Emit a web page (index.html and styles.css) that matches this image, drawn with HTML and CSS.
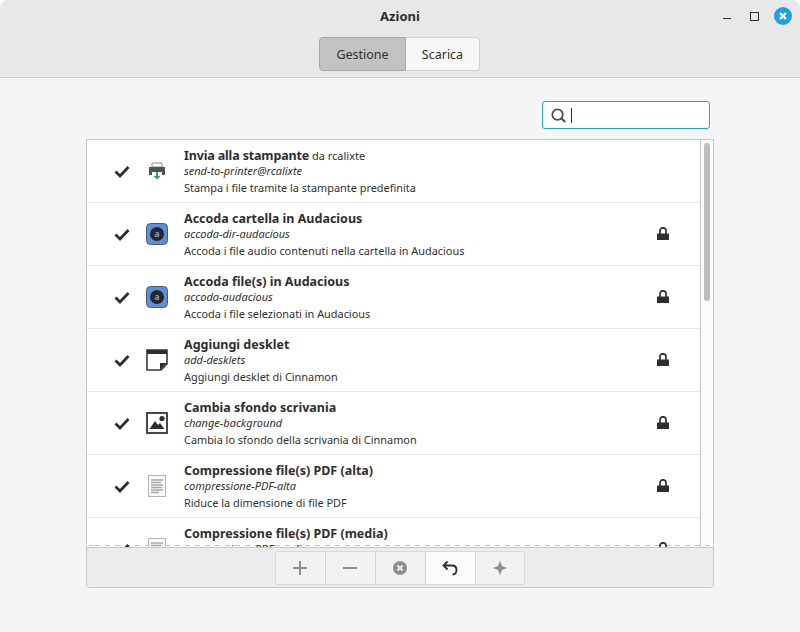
FILE: index.html
```html
<!DOCTYPE html>
<html lang="en">
<head>
  <meta charset="UTF-8">
  <title>Azioni</title>
  <link rel="stylesheet" href="styles.css">
</head>
<body>

<svg class="defs" width="0" height="0">
  <symbol id="check" viewBox="0 0 16 16">
    <path d="M1.5 8.5 L6 13 L14.5 4" fill="none" stroke="#2e2e2e" stroke-width="2.8"/>
  </symbol>
  <symbol id="lock" viewBox="0 0 12 13">
    <path d="M3 7 V3.8 a3 3 0 0 1 6 0 V7" fill="none" stroke="#2e2e2e" stroke-width="1.7"/>
    <rect x="0" y="6.5" width="12" height="6.5" fill="#2e2e2e"/>
  </symbol>
  <symbol id="pdf" viewBox="0 0 18 22">
    <rect x="0.5" y="0.5" width="17" height="21" fill="#fafafa" stroke="#b4b4b4"/>
    <path d="M3 5 H15 M3 7.5 H13 M3 10 H15 M3 12.5 H14 M3 15 H15 M3 17.5 H11" stroke="#a8a8a8" stroke-width="1.4"/>
  </symbol>
</svg>

<div class="window">
  <header class="titlebar">
    <div class="title">Azioni</div>
    <div class="winbtns">
      <span class="win-min"></span>
      <span class="win-max"></span>
      <svg class="win-close" width="18" height="18" viewBox="0 0 18 18">
        <circle cx="9" cy="9" r="9" fill="#20a0e0"/>
        <path d="M6 6 L12 12 M12 6 L6 12" stroke="#fff" stroke-width="2.4"/>
      </svg>
    </div>
    <div class="switcher">
      <button class="tab active">Gestione</button>
      <button class="tab">Scarica</button>
    </div>
  </header>

  <main class="content">
    <div class="search-row">
      <div class="search">
        <svg width="15" height="15" viewBox="0 0 16 16">
          <circle cx="7" cy="7" r="5.6" fill="none" stroke="#4e4e4e" stroke-width="1.9"/>
          <path d="M11 11 L15 15" stroke="#4e4e4e" stroke-width="2.2"/>
        </svg>
        <span class="caret"></span>
      </div>
    </div>

    <div class="panel">
      <div class="list-wrap">
        <ul class="list">
          <li class="row">
            <svg class="check"><use href="#check"/></svg>
            <svg class="icon" width="22" height="22" viewBox="0 0 22 22">
              <path d="M6 3 H16 V7 H6 Z" fill="none" stroke="#8a8a8a" stroke-width="1"/>
              <path d="M3 7 H19 V15 H16 V12 H6 V15 H3 Z" fill="#4f5356"/>
              <path d="M11 12 V17" stroke="#2aa55a" stroke-width="2"/>
              <path d="M7.5 16 H14.5 L11 19.5 Z" fill="#2aa55a"/>
            </svg>
            <div class="info">
              <div class="name"><b class="tight">Invia alla stampante</b> <span>da rcalixte</span></div>
              <div class="uuid">send-to-printer@rcalixte</div>
              <div class="desc">Stampa i file tramite la stampante predefinita</div>
            </div>
          </li>
          <li class="row">
            <svg class="check"><use href="#check"/></svg>
            <svg class="icon" width="22" height="22" viewBox="0 0 22 22">
              <rect x="0.5" y="0.5" width="21" height="21" rx="4" fill="#5d8fdc" stroke="#465a7a"/>
              <circle cx="11" cy="11" r="7" fill="#26282c"/>
              <text x="11" y="14" text-anchor="middle" font-family="Noto Sans" font-size="9" font-weight="bold" fill="#7f9cc8">a</text>
            </svg>
            <div class="info">
              <div class="name"><b>Accoda cartella in Audacious</b></div>
              <div class="uuid">accoda-dir-audacious</div>
              <div class="desc">Accoda i file audio contenuti nella cartella in Audacious</div>
            </div>
            <svg class="lock"><use href="#lock"/></svg>
          </li>
          <li class="row">
            <svg class="check"><use href="#check"/></svg>
            <svg class="icon" width="22" height="22" viewBox="0 0 22 22">
              <rect x="0.5" y="0.5" width="21" height="21" rx="4" fill="#5d8fdc" stroke="#465a7a"/>
              <circle cx="11" cy="11" r="7" fill="#26282c"/>
              <text x="11" y="14" text-anchor="middle" font-family="Noto Sans" font-size="9" font-weight="bold" fill="#7f9cc8">a</text>
            </svg>
            <div class="info">
              <div class="name"><b>Accoda file(s) in Audacious</b></div>
              <div class="uuid">accoda-audacious</div>
              <div class="desc">Accoda i file selezionati in Audacious</div>
            </div>
            <svg class="lock"><use href="#lock"/></svg>
          </li>
          <li class="row">
            <svg class="check"><use href="#check"/></svg>
            <svg class="icon" width="22" height="22" viewBox="0 0 22 22">
              <path d="M1 1 H21 V15 L15 21 H1 Z" fill="#fff" stroke="#3a3a3a" stroke-width="1.6"/>
              <rect x="1" y="1" width="20" height="4" fill="#2e2e2e"/>
              <path d="M21 14 H14 V21 Z" fill="#2e2e2e"/>
            </svg>
            <div class="info">
              <div class="name"><b>Aggiungi desklet</b></div>
              <div class="uuid">add-desklets</div>
              <div class="desc">Aggiungi desklet di Cinnamon</div>
            </div>
            <svg class="lock"><use href="#lock"/></svg>
          </li>
          <li class="row">
            <svg class="check"><use href="#check"/></svg>
            <svg class="icon" width="22" height="22" viewBox="0 0 22 22">
              <rect x="1" y="1" width="20" height="20" fill="#fff" stroke="#333" stroke-width="1.8"/>
              <circle cx="16" cy="6.5" r="2.6" fill="#2e2e2e"/>
              <path d="M3.5 17 L9 9 L12 13 L14 11 L18.5 17 Z" fill="#2e2e2e"/>
            </svg>
            <div class="info">
              <div class="name"><b>Cambia sfondo scrivania</b></div>
              <div class="uuid">change-background</div>
              <div class="desc">Cambia lo sfondo della scrivania di Cinnamon</div>
            </div>
            <svg class="lock"><use href="#lock"/></svg>
          </li>
          <li class="row">
            <svg class="check"><use href="#check"/></svg>
            <svg class="icon small" width="18" height="22"><use href="#pdf"/></svg>
            <div class="info">
              <div class="name"><b>Compressione file(s) PDF (alta)</b></div>
              <div class="uuid">compressione-PDF-alta</div>
              <div class="desc">Riduce la dimensione di file PDF</div>
            </div>
            <svg class="lock"><use href="#lock"/></svg>
          </li>
          <li class="row">
            <svg class="check"><use href="#check"/></svg>
            <svg class="icon small" width="18" height="22"><use href="#pdf"/></svg>
            <div class="info">
              <div class="name"><b>Compressione file(s) PDF (media)</b></div>
              <div class="uuid">compressione-PDF-media</div>
              <div class="desc">Riduce la dimensione di file PDF</div>
            </div>
            <svg class="lock"><use href="#lock"/></svg>
          </li>
        </ul>
        <div class="scrollbar"><div class="thumb"></div></div>
        <div class="dash"></div>
      </div>

      <div class="toolbar">
        <div class="tools">
          <button class="tool">
            <svg width="16" height="16" viewBox="0 0 16 16"><path d="M8 1 V15 M1 8 H15" stroke="#8e8e8e" stroke-width="2"/></svg>
          </button>
          <button class="tool">
            <svg width="16" height="16" viewBox="0 0 16 16"><path d="M1 8 H15" stroke="#8e8e8e" stroke-width="2"/></svg>
          </button>
          <button class="tool">
            <svg width="16" height="16" viewBox="0 0 16 16">
              <circle cx="8" cy="8" r="7" fill="#8e8e8e"/>
              <path d="M5.5 5.5 L10.5 10.5 M10.5 5.5 L5.5 10.5" stroke="#f0f0f0" stroke-width="2"/>
            </svg>
          </button>
          <button class="tool on">
            <svg width="16" height="16" viewBox="0 0 16 16">
              <path d="M5.5 1.5 L1.5 5.5 L5.5 9.5 M1.5 5.5 H10 C13 5.5 14.5 7.5 14.5 10 C14.5 12.5 13 14.5 10.5 14.5" fill="none" stroke="#2e2e2e" stroke-width="1.8"/>
            </svg>
          </button>
          <button class="tool">
            <svg width="16" height="16" viewBox="0 0 16 16"><path d="M8 1 L10 6 L15 8 L10 10 L8 15 L6 10 L1 8 L6 6 Z" fill="#8e8e8e"/></svg>
          </button>
        </div>
      </div>
    </div>
  </main>
</div>

</body>
</html>
```

FILE: styles.css
```css
* {
  box-sizing: border-box;
}
html, body {
  margin: 0;
  height: 100%;
  background: #fff;
}
body {
  font-family: "Noto Sans", "Open Sans", sans-serif;
  font-size: 11px;
  color: #303030;
  overflow: hidden;
}
.defs {
  position: absolute;
}
.window {
  width: 800px;
  height: 632px;
  display: flex;
  flex-direction: column;
  background: #f5f5f5;
  border-radius: 8px 8px 0 0;
  overflow: hidden;
}

/* header */
.titlebar {
  position: relative;
  height: 78px;
  background: #e8e8e8;
  border-bottom: 1px solid #cbcbcb;
  padding: 37px 1px 0 0;
  display: flex;
  justify-content: center;
  flex-shrink: 0;
}
.title {
  position: absolute;
  top: 7px;
  left: 0;
  right: 0;
  text-align: center;
  font-size: 13px;
  font-weight: bold;
  color: #2e2e2e;
}
.winbtns {
  position: absolute;
  top: 7px;
  right: 8px;
  display: flex;
  align-items: center;
  gap: 15px;
  height: 18px;
}
.win-min {
  width: 8px;
  height: 1px;
  background: #2e2e2e;
  margin-top: 5px;
  margin-right: 4px;
}
.win-max {
  width: 9px;
  height: 9px;
  border: 1px solid #2e2e2e;
}
.switcher {
  display: flex;
  height: 34px;
}
.tab {
  font-family: inherit;
  font-size: 12.5px;
  color: #303030;
  background: #f7f7f7;
  border: 1px solid #cfcfcf;
  border-left: none;
  border-radius: 0 4px 4px 0;
  width: 74px;
  padding: 0;
}
.tab.active {
  width: 87px;
  background: #c2c2c2;
  border: 1px solid #a8a8a8;
  border-radius: 4px 0 0 4px;
}

/* content */
.content {
  flex: 1;
  padding: 23px 86px 44px;
  display: flex;
  flex-direction: column;
}
.search-row {
  display: flex;
  justify-content: flex-end;
  padding-right: 4px;
  margin-bottom: 10px;
}
.search {
  width: 168px;
  height: 28px;
  background: #fff;
  border: 1px solid #20a0e0;
  border-radius: 3px;
  display: flex;
  align-items: center;
  padding-left: 8px;
  gap: 5px;
}
.caret {
  width: 1px;
  height: 15px;
  background: #2e2e2e;
}
.panel {
  flex: 1;
  border: 1px solid #c8c8c8;
  border-radius: 0 0 3px 3px;
  display: flex;
  flex-direction: column;
  min-height: 0;
}
.list-wrap {
  position: relative;
  height: 407px;
  display: flex;
  overflow: hidden;
  background: #fff;
  flex-shrink: 0;
}
.list {
  list-style: none;
  margin: 0;
  padding: 0;
  flex: 1;
}
.row {
  position: relative;
  z-index: 1;
  height: 63px;
  display: flex;
  align-items: center;
  border-bottom: 1px solid #e4e4e4;
}
.check {
  width: 16px;
  height: 16px;
  margin-left: 27px;
  flex-shrink: 0;
}
.icon {
  flex-shrink: 0;
  margin-left: 16px;
  margin-right: 16px;
}
.icon.small {
  margin-left: 18px;
  margin-right: 18px;
}
.info {
  flex: 1;
  align-self: flex-start;
  padding-top: 8px;
  line-height: 16px;
}
.name {
  font-size: 11px;
  margin-bottom: -2px;
}
.name b {
  font-size: 12.5px;
  color: #2e2e2e;
}
.name b.tight {
  letter-spacing: -0.15px;
}
.uuid {
  font-style: italic;
  line-height: 17px;
}
.desc {
  font-size: 10.9px;
  line-height: 17px;
}
.lock {
  width: 12px;
  height: 13px;
  margin-right: 31px;
  margin-bottom: 1px;
  flex-shrink: 0;
}
.scrollbar {
  width: 13px;
  border-left: 1px solid #c8c8c8;
  background: #fcfcfc;
  padding: 3px;
  flex-shrink: 0;
}
.thumb {
  width: 6px;
  height: 158px;
  border-radius: 3px;
  background: #bdbdbd;
}
.dash {
  position: absolute;
  left: 0;
  right: 0;
  bottom: 1px;
  height: 1px;
  background: repeating-linear-gradient(90deg, #c4c4c4 0 5px, transparent 5px 10px) 8px 0;
}

/* bottom toolbar */
.toolbar {
  flex: 1;
  background: #ececec;
  border-top: 1px solid #c8c8c8;
  display: flex;
  justify-content: center;
  align-items: center;
}
.tools {
  display: flex;
  height: 34px;
  background: #f2f2f2;
  border: 1px solid #d8d8d8;
  border-radius: 3px;
}
.tool {
  width: 50px;
  height: 100%;
  padding: 0 1px 0 0;
  background: #f2f2f2;
  border: none;
  border-right: 1px solid #d4d4d4;
  display: flex;
  align-items: center;
  justify-content: center;
}
.tool:last-child {
  border-right: none;
  width: 48px;
}
.tool.on {
  background: #fbfbfb;
}
```
